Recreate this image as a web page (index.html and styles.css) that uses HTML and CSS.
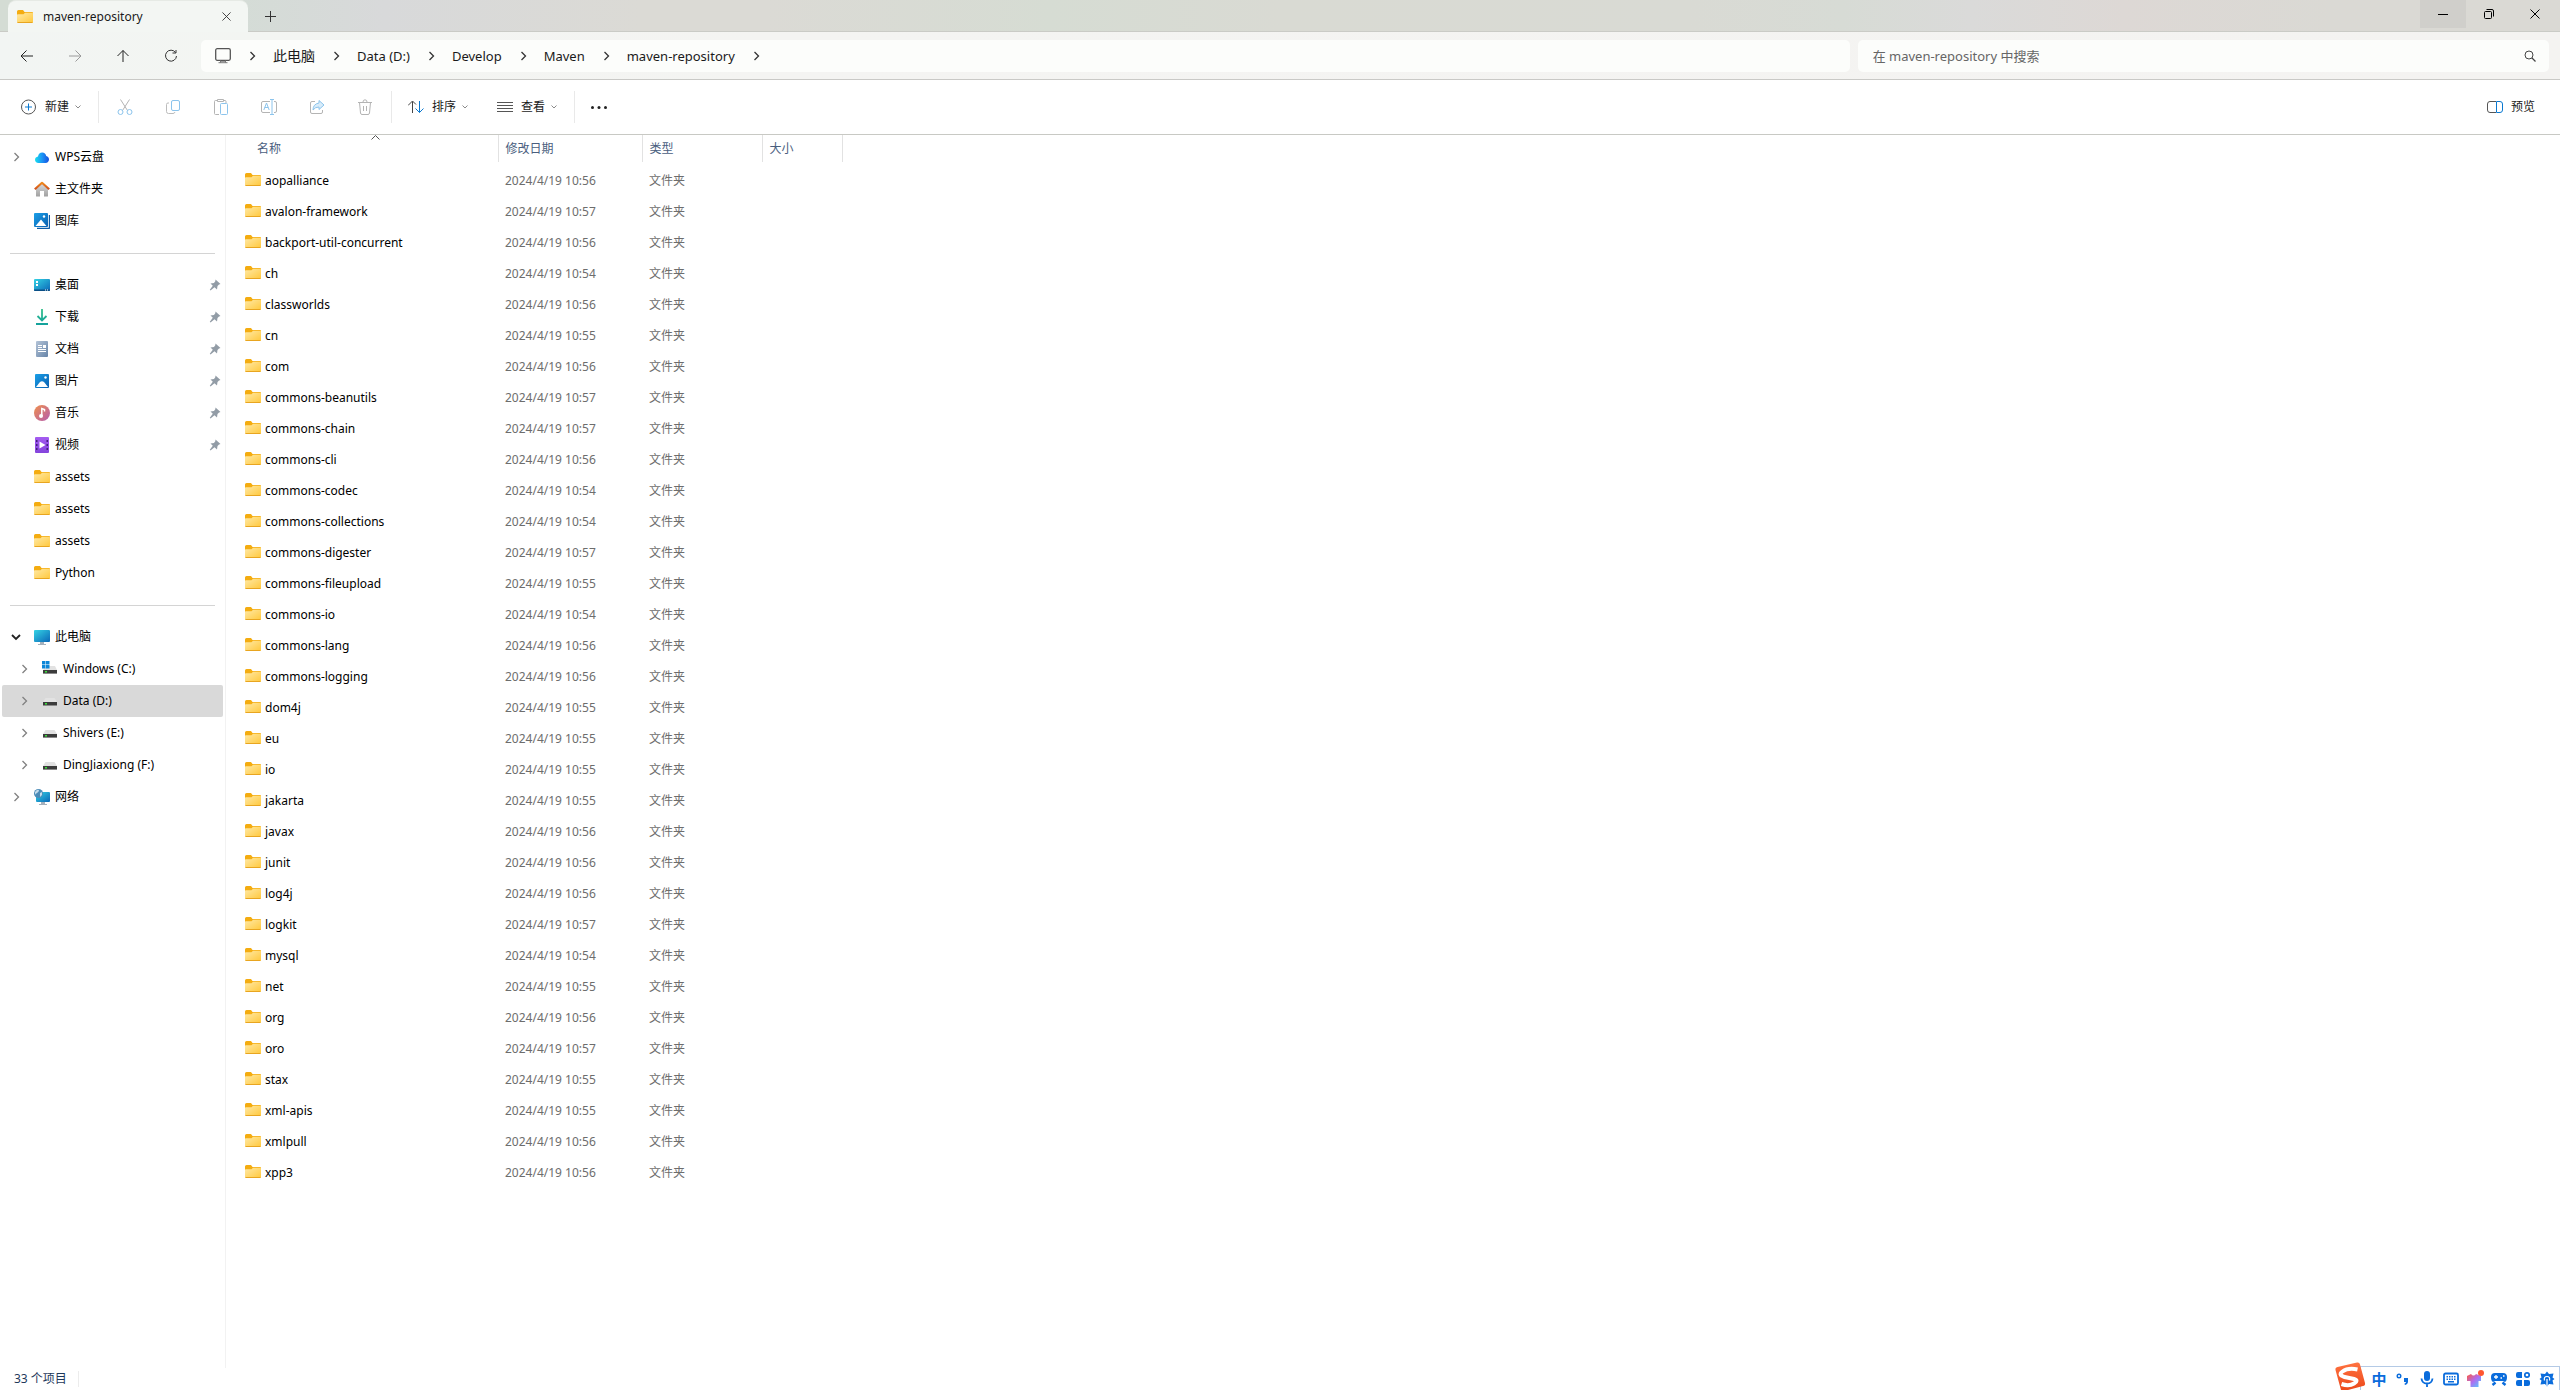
FILE: index.html
```html
<!DOCTYPE html>
<html lang="zh-CN">
<head>
<meta charset="utf-8">
<title>maven-repository</title>
<link rel="stylesheet" href="styles.css">
</head>
<body>
<svg class="defs" aria-hidden="true">
  <defs>
    <linearGradient id="g-folder" x1="0" y1="0" x2="1" y2="1"><stop offset="0" stop-color="#ffe9a6"/><stop offset="1" stop-color="#ffc83c"/></linearGradient>
    <linearGradient id="g-screen" x1="0" y1="0" x2="1" y2="1"><stop offset="0" stop-color="#34d3e4"/><stop offset="1" stop-color="#0b67b8"/></linearGradient>
    <linearGradient id="g-blue" x1="0" y1="0" x2="1" y2="1"><stop offset="0" stop-color="#1ba0e8"/><stop offset="1" stop-color="#0a5fb0"/></linearGradient>
    <linearGradient id="g-cloud" x1="0" y1="0" x2="1" y2="0"><stop offset="0" stop-color="#17e0ee"/><stop offset=".5" stop-color="#1c94f4"/><stop offset="1" stop-color="#1450e0"/></linearGradient>
    <linearGradient id="g-roof" x1="0" y1="0" x2="0" y2="1"><stop offset="0" stop-color="#f08a1c"/><stop offset="1" stop-color="#d0501c"/></linearGradient>
    <linearGradient id="g-wall" x1="0" y1="0" x2="0" y2="1"><stop offset="0" stop-color="#dcdcdc"/><stop offset="1" stop-color="#a0a0a0"/></linearGradient>
    <linearGradient id="g-down" x1="0" y1="0" x2="0" y2="1"><stop offset="0" stop-color="#34c08c"/><stop offset="1" stop-color="#14a29c"/></linearGradient>
    <linearGradient id="g-doc" x1="0" y1="0" x2="1" y2="1"><stop offset="0" stop-color="#b4c4d8"/><stop offset="1" stop-color="#6684a8"/></linearGradient>
    <linearGradient id="g-music" x1="0" y1="0" x2="1" y2="1"><stop offset="0" stop-color="#f0904c"/><stop offset="1" stop-color="#b45cb0"/></linearGradient>
    <linearGradient id="g-video" x1="0" y1="0" x2="0" y2="1"><stop offset="0" stop-color="#a45cf0"/><stop offset="1" stop-color="#8444dc"/></linearGradient>
    <linearGradient id="g-shirt" x1="0" y1="0" x2="1" y2="1"><stop offset="0" stop-color="#ff5a3c"/><stop offset=".5" stop-color="#b06cf0"/><stop offset="1" stop-color="#4cd0ff"/></linearGradient>
    <linearGradient id="g-sogou" x1="0" y1="0" x2="0" y2="1"><stop offset="0" stop-color="#ff7240"/><stop offset="1" stop-color="#ec4a1c"/></linearGradient>
    <symbol id="folder" viewBox="0 0 16 16"><path d="M0 2.5Q0 1 1.500 1H6l1.500 2H15q1 0 1 1v5H0z" fill="#f4ac10"/><path d="M0 6q0-.8.800-.8H6.500L8 3.800h7.200q.8 0 .8.800V13q0 1-1 1H1q-1 0-1-1z" fill="url(#g-folder)"/><path d="M.500 13.500h15" stroke="#e8a520"/></symbol>
    <symbol id="drive" viewBox="0 0 16 16"><path d="M3.500 5h9L15 9H1z" fill="#e2e2e2"/><path d="M1 9h14v4H1z" fill="#3c3c3c"/><path d="M1 12h14v1H1z" fill="#8a8a8a"/><path d="M3 10h2v1.500H3z" fill="#3ce03c"/></symbol>
    <symbol id="windrive" viewBox="0 0 16 16"><path d="M5 5h8l2 4H1z" fill="#e2e2e2"/><path d="M1 9h14v4H1z" fill="#3c3c3c"/><path d="M1 12h14v1H1z" fill="#8a8a8a"/><path d="M3 10h2v1.500H3z" fill="#3ce03c"/><path d="M0 0h3.500v3.500H0zM4 0h3.500v3.500H4zM0 4h3.500v3.500H0zM4 4h3.500v3.500H4z" fill="#0b86d8"/></symbol>
    <symbol id="pc" viewBox="0 0 16 16"><rect y="1" width="16" height="12" rx="1" fill="url(#g-screen)"/><path d="M6 13h4v2H6zM4 15h8v1H4z" fill="#a4b0bc"/></symbol>
    <symbol id="net" viewBox="0 0 16 16"><rect x="2" y="3" width="14" height="10" rx="1" fill="url(#g-screen)"/><path d="M7 13h4v2H7zM5 15h8v1H5z" fill="#a4b0bc"/><circle cx="4.500" cy="4.500" r="4.500" fill="#4c8cb8"/><path d="M1 3q2-3 4-2 0 2-2 3T1 6zM6 4l2-1v3L6 8z" fill="#c4dcec"/></symbol>
    <symbol id="cloud" viewBox="0 0 16 16"><path d="M4.500 14C2.300 14 1 12.500 1 10.800S2.400 8 4 7.600C4.400 5 6 3.500 8.200 3.500S11.800 5 12.200 7C14 7.300 15 8.800 15 10.500S13.500 14 11.500 14z" fill="url(#g-cloud)"/></symbol>
    <symbol id="home" viewBox="0 0 16 16"><path d="M2 7l6-5 6 5v8q0 .6-.6.600H10V10H6v5.600H2.600Q2 15.600 2 15z" fill="url(#g-wall)"/><path d="M.800 8.200L8 1.800l7.200 6.400" fill="none" stroke="url(#g-roof)" stroke-width="2.200" stroke-linejoin="round"/></symbol>
    <symbol id="gallery" viewBox="0 0 16 16"><path d="M3 15.500h11.500q1 0 1-1V2" fill="none" stroke="#0c5ca8" stroke-width="1.400"/><rect width="14" height="14" rx="1" fill="url(#g-blue)"/><circle cx="10" cy="3.500" r="1.200" fill="#fff"/><path d="M1.500 13L7 6.500l5.500 6.500z" fill="#fff"/></symbol>
    <symbol id="picture" viewBox="0 0 16 16"><rect x="1" y="1" width="14" height="14" rx="1" fill="url(#g-blue)"/><circle cx="11.500" cy="4.500" r="1.200" fill="#fff"/><path d="M2 14l4-5q2-1.500 4 0l4 5z" fill="#fff"/></symbol>
    <symbol id="desktop" viewBox="0 0 16 16"><rect y="2" width="16" height="12" rx="1" fill="url(#g-screen)"/><path d="M0 12.500h16V13q0 1-1 1H1q-1 0-1-1z" fill="#0a4f86"/><path d="M2 4h2v2H2zM2 7h2v2H2z" fill="#fff"/><path d="M11 12.500h1v1h-1zM13 12.500h1v1h-1z" fill="#fff"/></symbol>
    <symbol id="download" viewBox="0 0 16 16"><path d="M8 0v11M3.500 7L8 11.500 12.500 7M2 15h12" fill="none" stroke="url(#g-down)" stroke-width="1.800"/></symbol>
    <symbol id="doc" viewBox="0 0 16 16"><rect x="2" width="12" height="16" rx="1" fill="url(#g-doc)"/><path d="M4 4.500h4M4 6.500h4M4 8.500h8M4 10.500h8" stroke="#fff"/><path d="M9 4h3v3H9z" fill="#fff"/></symbol>
    <symbol id="music" viewBox="0 0 16 16"><circle cx="8" cy="8" r="8" fill="url(#g-music)"/><circle cx="7" cy="11" r="2" fill="#fff"/><path d="M7.800 11V3.500l2.700 1v2" fill="none" stroke="#fff" stroke-width="1.500"/></symbol>
    <symbol id="video" viewBox="0 0 16 16"><rect x="1" width="14" height="16" rx="1" fill="url(#g-video)"/><path d="M2 3h1.500v2H2zM2 7h1.500v2H2zM2 11h1.500v2H2zM12.500 3H14v2h-1.500zM12.500 7H14v2h-1.500zM12.500 11H14v2h-1.500z" fill="#43207c"/><path d="M5.500 4.500l6 3.500-6 3.500z" fill="#fff"/></symbol>
    <symbol id="pin" viewBox="0 0 12 12"><path d="M6.500.500l5 4.500-1.500.500-1.500 1.500-.500 3.500L5.500 8.300 1.500 11.500.800 10.800 3.800 6.700 1.500 4.500 5 4l1.300-1.800z" fill="#929ca6"/></symbol>
    <symbol id="right" viewBox="0 0 16 16"><path d="M6.500 4l4 4-4 4" fill="none" stroke="currentColor" stroke-width="1.300"/></symbol>
    <symbol id="down" viewBox="0 0 16 16"><path d="M4 6l4 4 4-4" fill="none" stroke="currentColor" stroke-width="1.800"/></symbol>
    <symbol id="caret" viewBox="0 0 8 8"><path d="M1.500 2.500L4 5l2.500-2.500" fill="none" stroke="#8a8a8a"/></symbol>
    <symbol id="close" viewBox="0 0 10 10"><path d="M.5.500l9 9M9.500.500l-9 9" stroke="currentColor" fill="none"/></symbol>
  </defs>
</svg>

<header class="titlebar">
  <div class="tab">
    <svg class="i16"><use href="#folder"/></svg>
    <span class="tab-title">maven-repository</span>
    <button type="button" class="tab-close" aria-label="关闭标签页"><svg class="i9"><use href="#close"/></svg></button>
  </div>
  <button type="button" class="tab-new" aria-label="新标签页"><svg class="i11" viewBox="0 0 11 11"><path d="M5.500 0v11M0 5.500h11" stroke="#333"/></svg></button>
  <div class="window-buttons">
    <button type="button" class="hot" aria-label="最小化"><svg class="i10" viewBox="0 0 10 10"><path d="M0 5.500h10" stroke="#000"/></svg></button>
    <button type="button" aria-label="还原"><svg class="i10" viewBox="0 0 10 10"><rect x=".5" y="2.500" width="7" height="7" rx="1" fill="none" stroke="#000"/><path d="M2.500.500H8q1.500 0 1.500 1.500v5.500" fill="none" stroke="#000"/></svg></button>
    <button type="button" aria-label="关闭"><svg class="i10"><use href="#close"/></svg></button>
  </div>
</header>

<div class="navbar">
  <div class="nav-buttons">
    <button type="button" aria-label="后退"><svg class="i16" viewBox="0 0 16 16"><path d="M14 8H2.500M7.500 2.500L2 8l5.500 5.500" fill="none" stroke="#222"/></svg></button>
    <button type="button" aria-label="前进" disabled><svg class="i16" viewBox="0 0 16 16"><path d="M2 8h11.500M8.500 2.500L14 8l-5.500 5.500" fill="none" stroke="#9a9a9a"/></svg></button>
    <button type="button" aria-label="向上"><svg class="i16" viewBox="0 0 16 16"><path d="M8 14V2.500M2.500 8L8 2.500 13.500 8" fill="none" stroke="#222"/></svg></button>
    <button type="button" aria-label="刷新"><svg class="i16" viewBox="0 0 16 16"><path d="M12.500 4.500A5.500 5.500 0 1 0 13.500 8M13 2v3H9.500" fill="none" stroke="#333"/></svg></button>
  </div>
  <nav class="address" aria-label="地址">
    <svg class="i16" viewBox="0 0 16 16"><rect x=".7" y=".7" width="14.600" height="11.600" rx="1.500" fill="none" stroke="#555" stroke-width="1.300"/><path d="M5.500 12.500v2M10.500 12.500v2M3.500 14.700h9" stroke="#777"/><path d="M6 13h4v1.500H6z" fill="#999"/></svg>
    <span class="sep"><svg class="i16"><use href="#right"/></svg></span><a href="#pc" class="cjk">此电脑</a>
    <span class="sep"><svg class="i16"><use href="#right"/></svg></span><a href="#d">Data (D:)</a>
    <span class="sep"><svg class="i16"><use href="#right"/></svg></span><a href="#develop">Develop</a>
    <span class="sep"><svg class="i16"><use href="#right"/></svg></span><a href="#maven">Maven</a>
    <span class="sep"><svg class="i16"><use href="#right"/></svg></span><a href="#repo">maven-repository</a>
    <span class="sep"><svg class="i16"><use href="#right"/></svg></span>
  </nav>
  <div class="search">
    <input type="text" placeholder="在 maven-repository 中搜索" aria-label="搜索">
    <svg class="i12" viewBox="0 0 12 12"><circle cx="5" cy="5" r="4" fill="none" stroke="#444"/><path d="M8 8l3.500 3.500" stroke="#444" stroke-width="1.200"/></svg>
  </div>
</div>

<div class="toolbar">
  <button type="button" class="labelled"><svg class="i16" viewBox="0 0 16 16"><circle cx="7.500" cy="8" r="7" fill="none" stroke="#555"/><path d="M7.500 4.500v7M4 8h7" stroke="#0a78d0"/></svg>新建<svg class="i8"><use href="#caret"/></svg></button>
  <span class="bar"></span>
  <button type="button" class="icon" aria-label="剪切" disabled><svg class="i16" viewBox="0 0 16 16"><path d="M3.500.500l7 11M12.500.500l-7 11" stroke="#b4b4b4" fill="none"/><circle cx="3.500" cy="13" r="2.500" fill="#fff" stroke="#8cc4ec"/><circle cx="12.500" cy="13" r="2.500" fill="#fff" stroke="#8cc4ec"/></svg></button>
  <button type="button" class="icon" aria-label="复制" disabled><svg class="i16" viewBox="0 0 16 16"><path d="M4 4H3Q1.500 4 1.500 5.500v7Q1.500 14.500 3.500 14.500H8q1.500 0 2-1.500" fill="none" stroke="#bcbcbc"/><rect x="6.500" y="1.500" width="8" height="10" rx="1.500" fill="none" stroke="#8cc4ec"/></svg></button>
  <button type="button" class="icon" aria-label="粘贴" disabled><svg class="i16" viewBox="0 0 16 16"><path d="M4 1.500H2.500q-1 0-1 1v12q0 1 1 1H6M10.500 1.500H12q1 0 1 1V4M4.500.500h6v2h-6z" fill="none" stroke="#b4b4b4"/><rect x="7.500" y="4.500" width="7" height="11" rx="1" fill="none" stroke="#8cc4ec"/></svg></button>
  <button type="button" class="icon" aria-label="重命名" disabled><svg class="i16" viewBox="0 0 16 16"><path d="M9 2.500H2Q.500 2.500.500 4v8q0 1.500 1.500 1.500h7M13 2.500h1q1.500 0 1.500 1.500v8q0 1.500-1.500 1.500h-1" fill="none" stroke="#b4b4b4"/><path d="M9 .500h4M9 15.500h4M11 .500v15M2.800 11l2.700-7 2.700 7M3.800 8.500h3.400" fill="none" stroke="#8cc4ec"/></svg></button>
  <button type="button" class="icon" aria-label="共享" disabled><svg class="i16" viewBox="0 0 16 16"><path d="M6 2.500H3Q1.500 2.500 1.500 4v9q0 1.500 1.500 1.500h9q1.500 0 1.500-1.500v-2" fill="none" stroke="#b4b4b4"/><path d="M10 1.500l5 4.500-5 4.500V8Q6 8 4 11q0-6 6-7z" fill="#d8ecfa" stroke="#8cc4ec" stroke-linejoin="round"/></svg></button>
  <button type="button" class="icon" aria-label="删除" disabled><svg class="i16" viewBox="0 0 16 16"><path d="M1 3.500h14M6 3Q6 .800 8 .800T10 3M2.500 3.500l1 10.500q.2 1.500 1.500 1.500h6q1.300 0 1.500-1.500l1-10.500M6.500 7v5M9.500 7v5" fill="none" stroke="#b4b4b4"/></svg></button>
  <span class="bar"></span>
  <button type="button" class="labelled"><svg class="i16" viewBox="0 0 16 16"><path d="M4.500 14V2.500M0 6.500l4.500-4.500 3.500 3.500" fill="none" stroke="#444"/><path d="M11.500 2v11.500M7.500 9.500l4 4 4-4" fill="none" stroke="#0a78d0"/></svg>排序<svg class="i8"><use href="#caret"/></svg></button>
  <button type="button" class="labelled"><svg class="i16" viewBox="0 0 16 16"><path d="M0 3.500h16M0 6.500h16M0 9.500h16M0 12.500h16" stroke="#555"/></svg>查看<svg class="i8"><use href="#caret"/></svg></button>
  <span class="bar"></span>
  <button type="button" class="more" aria-label="查看更多"><svg class="i16" viewBox="0 0 16 16"><circle cx="1.500" cy="8.500" r="1.500" fill="#222"/><circle cx="8" cy="8.500" r="1.500" fill="#222"/><circle cx="14.500" cy="8.500" r="1.500" fill="#222"/></svg></button>
  <button type="button" class="labelled preview"><svg class="i16" viewBox="0 0 16 16"><path d="M9 2.500H3Q.500 2.500.500 5v6q0 2.500 2.500 2.500h6" fill="none" stroke="#555"/><path d="M9.500 2.500H13q2.500 0 2.500 2.500v6q0 2.500-2.500 2.500H9.500z" fill="none" stroke="#0a78d0"/></svg>预览</button>
</div>

<div class="content">
  <nav class="sidebar" aria-label="导航窗格">
    <ul>
      <li><button type="button" class="exp" aria-label="展开"><svg class="i16"><use href="#right"/></svg></button><a href="#wps"><svg class="i16"><use href="#cloud"/></svg>WPS云盘</a></li>
      <li class="leaf"><a href="#home-folder"><svg class="i16"><use href="#home"/></svg>主文件夹</a></li>
      <li class="leaf"><a href="#gallery-folder"><svg class="i16"><use href="#gallery"/></svg>图库</a></li>
    </ul>
    <hr>
    <ul>
      <li class="leaf"><a href="#q1"><svg class="i16"><use href="#desktop"/></svg>桌面</a><svg class="i12"><use href="#pin"/></svg></li>
      <li class="leaf"><a href="#q2"><svg class="i16"><use href="#download"/></svg>下载</a><svg class="i12"><use href="#pin"/></svg></li>
      <li class="leaf"><a href="#q3"><svg class="i16"><use href="#doc"/></svg>文档</a><svg class="i12"><use href="#pin"/></svg></li>
      <li class="leaf"><a href="#q4"><svg class="i16"><use href="#picture"/></svg>图片</a><svg class="i12"><use href="#pin"/></svg></li>
      <li class="leaf"><a href="#q5"><svg class="i16"><use href="#music"/></svg>音乐</a><svg class="i12"><use href="#pin"/></svg></li>
      <li class="leaf"><a href="#q6"><svg class="i16"><use href="#video"/></svg>视频</a><svg class="i12"><use href="#pin"/></svg></li>
      <li class="leaf"><a href="#q7"><svg class="i16"><use href="#folder"/></svg>assets</a></li>
      <li class="leaf"><a href="#q8"><svg class="i16"><use href="#folder"/></svg>assets</a></li>
      <li class="leaf"><a href="#q9"><svg class="i16"><use href="#folder"/></svg>assets</a></li>
      <li class="leaf"><a href="#q10"><svg class="i16"><use href="#folder"/></svg>Python</a></li>
    </ul>
    <hr>
    <ul>
      <li><button type="button" class="exp open" aria-label="折叠"><svg class="i16"><use href="#down"/></svg></button><a href="#this-pc"><svg class="i16"><use href="#pc"/></svg>此电脑</a></li>
      <li class="child"><button type="button" class="exp" aria-label="展开"><svg class="i16"><use href="#right"/></svg></button><a href="#drive-c"><svg class="i16"><use href="#windrive"/></svg>Windows (C:)</a></li>
      <li class="child selected"><button type="button" class="exp" aria-label="展开"><svg class="i16"><use href="#right"/></svg></button><a href="#drive-d"><svg class="i16"><use href="#drive"/></svg>Data (D:)</a></li>
      <li class="child"><button type="button" class="exp" aria-label="展开"><svg class="i16"><use href="#right"/></svg></button><a href="#drive-e"><svg class="i16"><use href="#drive"/></svg>Shivers (E:)</a></li>
      <li class="child"><button type="button" class="exp" aria-label="展开"><svg class="i16"><use href="#right"/></svg></button><a href="#drive-f"><svg class="i16"><use href="#drive"/></svg>DingJiaxiong (F:)</a></li>
      <li><button type="button" class="exp" aria-label="展开"><svg class="i16"><use href="#right"/></svg></button><a href="#network"><svg class="i16"><use href="#net"/></svg>网络</a></li>
    </ul>
  </nav>

  <main>
    <table>
      <thead>
        <tr><th class="c-name">名称<svg class="sorted" viewBox="0 0 9 5"><path d="M.500 4.500l4-4 4 4" fill="none" stroke="#555"/></svg></th><th class="c-date">修改日期</th><th class="c-type">类型</th><th class="c-size">大小</th></tr>
      </thead>
      <tbody>
        <tr><td><svg class="i16"><use href="#folder"/></svg>aopalliance</td><td>2024/4/19 10:56</td><td>文件夹</td><td></td></tr>
        <tr><td><svg class="i16"><use href="#folder"/></svg>avalon-framework</td><td>2024/4/19 10:57</td><td>文件夹</td><td></td></tr>
        <tr><td><svg class="i16"><use href="#folder"/></svg>backport-util-concurrent</td><td>2024/4/19 10:56</td><td>文件夹</td><td></td></tr>
        <tr><td><svg class="i16"><use href="#folder"/></svg>ch</td><td>2024/4/19 10:54</td><td>文件夹</td><td></td></tr>
        <tr><td><svg class="i16"><use href="#folder"/></svg>classworlds</td><td>2024/4/19 10:56</td><td>文件夹</td><td></td></tr>
        <tr><td><svg class="i16"><use href="#folder"/></svg>cn</td><td>2024/4/19 10:55</td><td>文件夹</td><td></td></tr>
        <tr><td><svg class="i16"><use href="#folder"/></svg>com</td><td>2024/4/19 10:56</td><td>文件夹</td><td></td></tr>
        <tr><td><svg class="i16"><use href="#folder"/></svg>commons-beanutils</td><td>2024/4/19 10:57</td><td>文件夹</td><td></td></tr>
        <tr><td><svg class="i16"><use href="#folder"/></svg>commons-chain</td><td>2024/4/19 10:57</td><td>文件夹</td><td></td></tr>
        <tr><td><svg class="i16"><use href="#folder"/></svg>commons-cli</td><td>2024/4/19 10:56</td><td>文件夹</td><td></td></tr>
        <tr><td><svg class="i16"><use href="#folder"/></svg>commons-codec</td><td>2024/4/19 10:54</td><td>文件夹</td><td></td></tr>
        <tr><td><svg class="i16"><use href="#folder"/></svg>commons-collections</td><td>2024/4/19 10:54</td><td>文件夹</td><td></td></tr>
        <tr><td><svg class="i16"><use href="#folder"/></svg>commons-digester</td><td>2024/4/19 10:57</td><td>文件夹</td><td></td></tr>
        <tr><td><svg class="i16"><use href="#folder"/></svg>commons-fileupload</td><td>2024/4/19 10:55</td><td>文件夹</td><td></td></tr>
        <tr><td><svg class="i16"><use href="#folder"/></svg>commons-io</td><td>2024/4/19 10:54</td><td>文件夹</td><td></td></tr>
        <tr><td><svg class="i16"><use href="#folder"/></svg>commons-lang</td><td>2024/4/19 10:56</td><td>文件夹</td><td></td></tr>
        <tr><td><svg class="i16"><use href="#folder"/></svg>commons-logging</td><td>2024/4/19 10:56</td><td>文件夹</td><td></td></tr>
        <tr><td><svg class="i16"><use href="#folder"/></svg>dom4j</td><td>2024/4/19 10:55</td><td>文件夹</td><td></td></tr>
        <tr><td><svg class="i16"><use href="#folder"/></svg>eu</td><td>2024/4/19 10:55</td><td>文件夹</td><td></td></tr>
        <tr><td><svg class="i16"><use href="#folder"/></svg>io</td><td>2024/4/19 10:55</td><td>文件夹</td><td></td></tr>
        <tr><td><svg class="i16"><use href="#folder"/></svg>jakarta</td><td>2024/4/19 10:55</td><td>文件夹</td><td></td></tr>
        <tr><td><svg class="i16"><use href="#folder"/></svg>javax</td><td>2024/4/19 10:56</td><td>文件夹</td><td></td></tr>
        <tr><td><svg class="i16"><use href="#folder"/></svg>junit</td><td>2024/4/19 10:56</td><td>文件夹</td><td></td></tr>
        <tr><td><svg class="i16"><use href="#folder"/></svg>log4j</td><td>2024/4/19 10:56</td><td>文件夹</td><td></td></tr>
        <tr><td><svg class="i16"><use href="#folder"/></svg>logkit</td><td>2024/4/19 10:57</td><td>文件夹</td><td></td></tr>
        <tr><td><svg class="i16"><use href="#folder"/></svg>mysql</td><td>2024/4/19 10:54</td><td>文件夹</td><td></td></tr>
        <tr><td><svg class="i16"><use href="#folder"/></svg>net</td><td>2024/4/19 10:55</td><td>文件夹</td><td></td></tr>
        <tr><td><svg class="i16"><use href="#folder"/></svg>org</td><td>2024/4/19 10:56</td><td>文件夹</td><td></td></tr>
        <tr><td><svg class="i16"><use href="#folder"/></svg>oro</td><td>2024/4/19 10:57</td><td>文件夹</td><td></td></tr>
        <tr><td><svg class="i16"><use href="#folder"/></svg>stax</td><td>2024/4/19 10:55</td><td>文件夹</td><td></td></tr>
        <tr><td><svg class="i16"><use href="#folder"/></svg>xml-apis</td><td>2024/4/19 10:55</td><td>文件夹</td><td></td></tr>
        <tr><td><svg class="i16"><use href="#folder"/></svg>xmlpull</td><td>2024/4/19 10:56</td><td>文件夹</td><td></td></tr>
        <tr><td><svg class="i16"><use href="#folder"/></svg>xpp3</td><td>2024/4/19 10:56</td><td>文件夹</td><td></td></tr>
      </tbody>
    </table>
  </main>
</div>

<footer class="status"><span>33 个项目</span></footer>

<div class="ime">
  <svg class="ime-logo" viewBox="0 0 32 28"><path d="M1.500 8Q1 5.500 3.500 5L23 .500q2.500-.500 3 2L31 21q.500 2.500-2 3l-15 4H7z" fill="url(#g-sogou)"/><path d="M23.500 7.500Q14 5.500 8.500 9.500T13 15.500l7 1.500q5 1.500 0 4.500T7.500 22" fill="none" stroke="#fff" stroke-width="4"/></svg>
  <button type="button" class="ime-lang">中</button>
  <button type="button" aria-label="标点"><svg class="i16" viewBox="0 0 16 16"><circle cx="4" cy="5" r="1.800" fill="none" stroke="#0a6cdc" stroke-width="1.400"/><path d="M9 7h4v3.500q0 2.500-3 3.500l-.6-1.200Q11 12 11 11H9z" fill="#0a6cdc"/></svg></button>
  <button type="button" aria-label="语音"><svg class="i16" viewBox="0 0 16 16"><rect x="5" y="0" width="6" height="10" rx="3" fill="#0a6cdc"/><path d="M2.500 7.500q.500 5 5.500 5t5.500-5M8 12v4" fill="none" stroke="#0a6cdc" stroke-width="1.800"/></svg></button>
  <button type="button" aria-label="软键盘"><svg class="i16" viewBox="0 0 16 16"><rect x="1" y="2.500" width="14" height="11" rx="1.500" fill="none" stroke="#0a6cdc" stroke-width="1.800"/><path d="M3.500 5h1.500v1.500H3.500zM6 5h1.500v1.500H6zM8.500 5H10v1.500H8.500zM11 5h1.500v1.500H11zM3.500 7.500h1.500V9H3.500zM6 7.500h1.500V9H6zM8.500 7.500H10V9H8.500zM11 7.500h1.500V9H11zM5 10h6v1.500H5z" fill="#0a6cdc"/></svg></button>
  <button type="button" aria-label="皮肤"><svg class="i18" viewBox="0 0 18 18"><path d="M1 6l4-2q2.500 3 5 0l5 2v5h-2.500v6h-8v-6H1z" fill="url(#g-shirt)"/><circle cx="15" cy="3" r="3" fill="#ff5630"/></svg></button>
  <button type="button" aria-label="游戏"><svg class="i16" viewBox="0 0 16 16"><path d="M4 2h8q4 0 4 4t-2 5l-2-1H4l-2 1Q0 10 0 6t4-4z" fill="#0a6cdc"/><path d="M3 6h4M5 4v4M9.500 7h1.500M12 5h1.500" stroke="#fff" stroke-width="1.300"/><path d="M4.500 11.500L1.500 14M11.500 11.500l3 2.500" stroke="#0a6cdc" stroke-width="2.400"/></svg></button>
  <button type="button" aria-label="工具箱"><svg class="i16" viewBox="0 0 16 16"><path d="M3 1h4v6H3Q1 7 1 5V3q0-2 2-2zM3 9h4v6H3q-2 0-2-2v-2q0-2 2-2zM9 9h4q2 0 2 2v2q0 2-2 2H9z" fill="#0a6cdc"/><circle cx="12" cy="4" r="2.200" fill="none" stroke="#0a6cdc" stroke-width="1.700"/></svg></button>
  <button type="button" aria-label="设置"><svg class="i16" viewBox="0 0 16 16"><path d="M8 .500l2 2.500 4.500-.5-1 4L15.500 8l-2 1.500 1 4L10 13l-2 2.500L6 13l-4.500.5 1-4L.500 8l2-1.500-1-4L6 3z" fill="#0a6cdc"/><path d="M5.500 9.500q-1-4 2.500-4t2.500 4M8 8v7" fill="none" stroke="#fff" stroke-width="1.200"/></svg></button>
</div>
</body>
</html>
```
FILE: styles.css
```css
* { box-sizing: border-box; }

body {
  margin: 0;
  min-height: 100vh;
  display: flex;
  flex-direction: column;
  background: #fff;
  color: #000;
  font: 12px/16px "Noto Sans", "Noto Sans CJK SC", sans-serif;
}

button {
  display: flex;
  align-items: center;
  justify-content: center;
  padding: 0;
  border: 0;
  background: none;
  color: inherit;
  font: inherit;
}

a { color: inherit; text-decoration: none; }
ul { margin: 0; padding: 0; list-style: none; }
svg { display: block; flex: none; }

.defs { position: absolute; width: 0; height: 0; }
.i8 { width: 8px; height: 8px; }
.i9 { width: 9px; height: 9px; }
.i10 { width: 10px; height: 10px; }
.i11 { width: 11px; height: 11px; }
.i12 { width: 12px; height: 12px; }
.i16 { width: 16px; height: 16px; }
.i18 { width: 18px; height: 18px; }

/* Title bar */
.titlebar {
  display: flex;
  height: 32px;
  padding-left: 8px;
  border-bottom: 1px solid #cacbc6;
  background: linear-gradient(90deg, #d4dcd4 0, #d4dcd6 9%, #d8d9da 15%, #dbdad5 25%, #dbdad5 30%, #d6dcd3 41%, #d9dad3 50%, #d9dad4 66%, #d7dbd5 72%, #dadad9 77%, #ddd8d5 83%, #dad9d4 91%);
}

.tab {
  display: flex;
  align-items: center;
  width: 240px;
  height: 32px;
  padding: 0 9px;
  border-top: 1px solid #e6eae5;
  border-radius: 8px 8px 0 0;
  background: #f3f6f3;
}

.tab-title { flex: 1; margin-left: 10px; color: #1a1a1a; }
.tab-close { width: 25px; height: 25px; color: #333; }
.tab-new { width: 45px; height: 32px; }

.window-buttons { display: flex; margin-left: auto; margin-right: 2px; }
.window-buttons button { width: 46px; height: 28px; }
.window-buttons .hot { background: #d0cfcb; }

/* Navigation bar */
.navbar {
  display: grid;
  grid-template-columns: auto 31fr 13fr;
  align-items: center;
  gap: 8px;
  height: 48px;
  padding: 0 11px 0 3px;
  border-bottom: 1px solid #c9c9c6;
  background: linear-gradient(90deg, #f2f5f3 0, #f3f5f2 10%, #f4f4f2 30%, #f4f3f1 100%);
}

.nav-buttons { display: flex; margin-right: -2px; }
.nav-buttons button { width: 48px; height: 32px; }

.address, .search {
  display: flex;
  align-items: center;
  height: 32px;
  border-radius: 5px;
  background: #fcfdfb;
}

.address { padding-left: 14px; color: #1a1a1a; font-size: 13px; }
.address .cjk { font-size: 14px; }
.sep { display: flex; justify-content: center; width: 42px; color: #333; }

.search { padding: 0 13px 0 15px; }
.search input {
  flex: 1;
  min-width: 0;
  padding: 0;
  border: 0;
  outline: 0;
  background: none;
  font: inherit;
  font-size: 13px;
}
.search input::placeholder { color: #666; opacity: 1; }

/* Command bar */
.toolbar {
  display: flex;
  align-items: center;
  height: 55px;
  padding: 0 9px 0 7px;
  border-bottom: 1px solid #c8c9c4;
  color: #1a1a1a;
}

.labelled { gap: 8px; height: 32px; padding: 0 14px; }
.labelled .i8 { margin-left: -3px; }
.bar { width: 1px; height: 32px; margin: 0 2px; background: #e9e9e9; }
.icon { width: 48px; height: 32px; }
.more { width: 44px; height: 32px; }
.preview { margin-left: auto; padding: 0 16px; }

/* Content */
.content { display: flex; flex: 1; }

.sidebar {
  flex: none;
  width: 226px;
  padding: 6px 2px 0;
  border-right: 1px solid #f2f2f2;
}

.sidebar li {
  display: flex;
  align-items: center;
  height: 32px;
  padding: 0 2px 0 6px;
  border-radius: 2px;
}
.sidebar li.leaf { padding-left: 32px; }
.sidebar li.child { padding-left: 14px; }
.sidebar li.selected { background: #d9d9d9; }
.sidebar a { display: flex; align-items: center; flex: 1; gap: 5px; }
.exp { width: 16px; height: 16px; margin-right: 10px; color: #808080; }
.exp.open { color: #222; }

.sidebar hr {
  height: 1px;
  margin: 16px 8px 15px;
  border: 0;
  background: #d4d4d4;
}

main { flex: 1; padding-left: 19px; }

table { border-collapse: collapse; table-layout: fixed; width: 597px; }

th {
  position: relative;
  height: 27px;
  padding: 0 0 0 7px;
  border-right: 1px solid #e2e2e2;
  color: #4a5e7e;
  font-weight: 400;
  text-align: left;
}
.c-name { width: 253px; padding-left: 12px; }
.c-date { width: 144px; }
.c-type { width: 120px; }
.c-size { width: 80px; }
.sorted { position: absolute; top: 0; left: 50%; width: 9px; height: 5px; }

tbody::before { content: ""; display: block; height: 3px; }

td { height: 31px; padding: 0 0 0 7px; color: #6d6d6d; }
td:first-child { padding-left: 0; color: #000; }
td svg { display: inline-block; margin-right: 4px; vertical-align: -3px; }

/* Status bar */
.status { display: flex; height: 22px; padding-left: 14px; color: #1e395b; }
.status span { height: 16px; margin-top: 3px; padding-right: 11px; border-right: 1px solid #ececec; }

/* Input method bar floating over the window */
.ime {
  position: fixed;
  right: 0;
  bottom: 0;
  display: flex;
  align-items: center;
  height: 24px;
  padding-left: 6px;
  border: 1px solid #b4cae6;
  border-bottom: 0;
  background: #fff;
}
.ime button { width: 24px; height: 24px; }
.ime .ime-lang { color: #0a6cdc; font-size: 15px; font-weight: 700; }
.ime-logo { position: absolute; left: -27px; bottom: 0; width: 32px; height: 28px; }
```
